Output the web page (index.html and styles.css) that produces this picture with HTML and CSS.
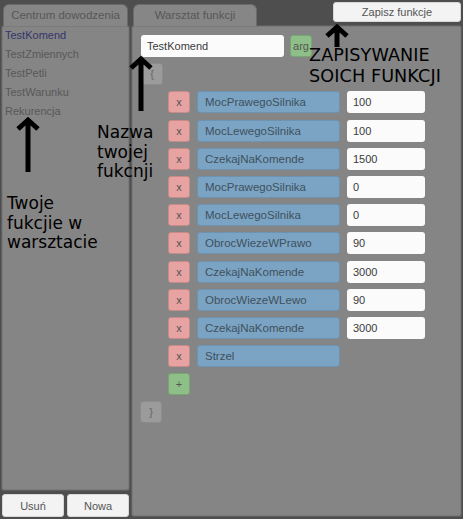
FILE: index.html
```html
<!DOCTYPE html>
<html lang="pl">
<head>
<meta charset="utf-8">
<title>Warsztat funkcji</title>
<link rel="stylesheet" href="styles.css">
</head>
<body>
<div class="app">
  <div class="left">
    <div class="tabrow"><div class="tab tab-left">Centrum dowodzenia</div></div>
    <div class="panel list">
      <div class="item active">TestKomend</div>
      <div class="item">TestZmiennych</div>
      <div class="item">TestPetli</div>
      <div class="item">TestWarunku</div>
      <div class="item">Rekurencja</div>
    </div>
    <div class="btnrow">
      <div class="btn">Usuń</div>
      <div class="btn">Nowa</div>
    </div>
  </div>
  <div class="right">
    <div class="tabrow rtabrow">
      <div class="tab tab-right">Warsztat funkcji</div>
      <div class="btn save">Zapisz funkcje</div>
    </div>
    <div class="panel work">
      <div class="row">
        <div class="input name">TestKomend</div>
        <div class="sq green">arg</div>
      </div>
      <div class="row"><div class="sq gray">{</div></div>
      <div class="row ind"><div class="sq pink">x</div><div class="field">MocPrawegoSilnika</div><div class="input val">100</div></div>
      <div class="row ind"><div class="sq pink">x</div><div class="field">MocLewegoSilnika</div><div class="input val">100</div></div>
      <div class="row ind"><div class="sq pink">x</div><div class="field">CzekajNaKomende</div><div class="input val">1500</div></div>
      <div class="row ind"><div class="sq pink">x</div><div class="field">MocPrawegoSilnika</div><div class="input val">0</div></div>
      <div class="row ind"><div class="sq pink">x</div><div class="field">MocLewegoSilnika</div><div class="input val">0</div></div>
      <div class="row ind"><div class="sq pink">x</div><div class="field">ObrocWiezeWPrawo</div><div class="input val">90</div></div>
      <div class="row ind"><div class="sq pink">x</div><div class="field">CzekajNaKomende</div><div class="input val">3000</div></div>
      <div class="row ind"><div class="sq pink">x</div><div class="field">ObrocWiezeWLewo</div><div class="input val">90</div></div>
      <div class="row ind"><div class="sq pink">x</div><div class="field">CzekajNaKomende</div><div class="input val">3000</div></div>
      <div class="row ind"><div class="sq pink">x</div><div class="field">Strzel</div></div>
      <div class="row ind"><div class="sq green">+</div></div>
      <div class="row close"><div class="sq gray">}</div></div>
    </div>
  </div>

  <div class="note note-save">ZAPISYWANIE<br>SOICH FUNKCJI</div>
  <div class="note note-name">Nazwa<br>twojej<br>fukcnji</div>
  <div class="note note-list">Twoje<br>fukcjie w<br>warsztacie</div>

  <svg class="arrow arrow-save" width="28" height="24" viewBox="0 0 28 24"><path d="M14 24V4M4 13L14 4L24 13" fill="none" stroke="#000" stroke-width="5"/></svg>
  <svg class="arrow arrow-name" width="28" height="56" viewBox="0 0 28 56"><path d="M14 56V4M4 13L14 4L24 13" fill="none" stroke="#000" stroke-width="5"/></svg>
  <svg class="arrow arrow-list" width="28" height="56" viewBox="0 0 28 56"><path d="M14 56V4M4 13L14 4L24 13" fill="none" stroke="#000" stroke-width="5"/></svg>
</div>
</body>
</html>
```
FILE: styles.css
```css
* { box-sizing: border-box; }
html, body { margin: 0; padding: 0; }
body {
  background: #4e4e4e;
  font-family: "Liberation Sans", Arial, sans-serif;
  font-size: 11px;
  color: #555;
  width: 463px;
  height: 519px;
  overflow: hidden;
}
.app {
  position: relative;
  display: flex;
  gap: 1px;
  width: 463px;
  height: 519px;
}
.left {
  width: 130px;
  display: flex;
  flex-direction: column;
}
.right {
  width: 331px;
  display: flex;
  flex-direction: column;
}
.tabrow {
  height: 25px;
  display: flex;
  align-items: flex-start;
  flex-shrink: 0;
}
.tab {
  margin-top: 4px;
  height: 22px;
  background: #868686;
  border: 1px solid #6a6a6a;
  border-bottom: none;
  border-radius: 6px 6px 0 0;
  color: #575757;
  display: flex;
  align-items: center;
  justify-content: center;
  font-size: 11.5px;
  padding-bottom: 2px;
  position: relative;
  z-index: 1;
}
.tab-left { margin-left: 3px; width: 125px; }
.tab-right { margin-left: 2px; width: 124px; }
.save {
  margin-left: auto;
  margin-right: 1px;
  margin-top: 2px;
  width: 128px;
  height: 20px;
}
.panel {
  background: #858585;
  border: 1px solid #5e5e5e;
  border-radius: 3px;
  box-shadow: inset 0 0 0 1px #7a7a7a;
}
.list {
  flex: 1;
  margin-left: 1px;
  padding: 0 0 0 3px;
  display: flex;
  flex-direction: column;
}
.item {
  height: 19px;
  line-height: 19px;
  color: #585858;
}
.item.active { color: #34346a; }
.btnrow {
  display: flex;
  gap: 3px;
  padding: 3px 0 2px 2px;
  height: 28px;
  flex-shrink: 0;
}
.btn {
  background: #f3f3f3;
  border-radius: 3px;
  border: 1px solid #d8d8d8;
  color: #555;
  display: flex;
  align-items: center;
  justify-content: center;
  font-size: 11px;
}
.btnrow .btn { width: 62px; height: 23px; }
.work {
  flex: 1;
  margin-bottom: 2px;
  padding: 9px 0 0 9px;
  display: flex;
  flex-direction: column;
  gap: 6.2px;
}
.row {
  display: flex;
  gap: 7px;
  height: 22px;
}
.row.ind { padding-left: 27px; }
.row.close { margin-left: -1px; }
.row:first-child { gap: 6px; }
.input {
  background: #fbfbfb;
  border-radius: 3px;
  color: #3a3a3a;
  display: flex;
  align-items: center;
  padding-left: 6px;
  font-size: 11px;
}
.name { width: 143px; }
.val { width: 78px; }
.sq {
  width: 22px;
  height: 22px;
  border-radius: 3px;
  display: flex;
  align-items: center;
  justify-content: center;
  color: #555;
  font-size: 11px;
}
.pink { background: #e7a2a2; border: 1px solid #c98a8a; }
.green { background: #8fbf89; border: 1px solid #77a672; }
.gray { background: #9b9b9b; border: 1px solid #8c8c8c; color: #666; }
.field {
  width: 143px;
  background: #7ba4c4;
  border: 1px solid #6d93b1;
  border-radius: 3px;
  color: #40505c;
  display: flex;
  align-items: center;
  padding-left: 7px;
  font-size: 11.5px;
}
.note {
  position: absolute;
  font-family: "DejaVu Sans", sans-serif;
  color: #000;
  z-index: 5;
}
.note-save { left: 309px; top: 45px; font-size: 17.6px; line-height: 21px; letter-spacing: 0.1px; }
.note-name { left: 97px; top: 123px; font-size: 17px; line-height: 19.5px; }
.note-list { left: 7px; top: 194px; font-size: 17px; line-height: 19.5px; }
.arrow { position: absolute; z-index: 6; }
.arrow-save { left: 323px; top: 23px; }
.arrow-name { left: 127px; top: 55px; }
.arrow-list { left: 14px; top: 116px; }
```
